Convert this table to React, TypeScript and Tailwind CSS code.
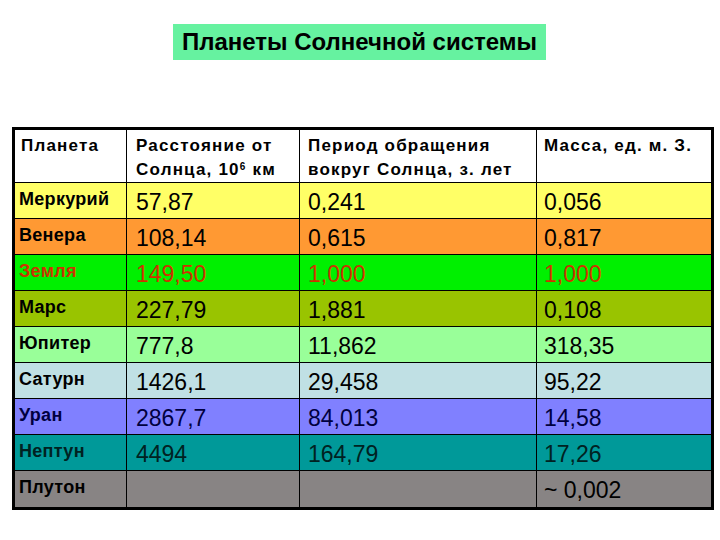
const rows = [
  { name: "Меркурий", dist: "57,87", period: "0,241", mass: "0,056", bg: "bg-[#ffff66]", text: "text-black" },
  { name: "Венера", dist: "108,14", period: "0,615", mass: "0,817", bg: "bg-[#ff9933]", text: "text-black" },
  { name: "Земля", dist: "149,50", period: "1,000", mass: "1,000", bg: "bg-[#00f000]", text: "text-[#cc3300]" },
  { name: "Марс", dist: "227,79", period: "1,881", mass: "0,108", bg: "bg-[#99c400]", text: "text-black" },
  { name: "Юпитер", dist: "777,8", period: "11,862", mass: "318,35", bg: "bg-[#99ff99]", text: "text-black" },
  { name: "Сатурн", dist: "1426,1", period: "29,458", mass: "95,22", bg: "bg-[#c0e0e4]", text: "text-black" },
  { name: "Уран", dist: "2867,7", period: "84,013", mass: "14,58", bg: "bg-[#8080ff]", text: "text-[#000040]" },
  { name: "Нептун", dist: "4494", period: "164,79", mass: "17,26", bg: "bg-[#009999]", text: "text-[#002222]" },
  { name: "Плутон", dist: "", period: "", mass: "~ 0,002", bg: "bg-[#888484]", text: "text-black" },
];

export default function App() {
  return (
    <div className="h-[540px] w-[720px] bg-white font-['Liberation_Sans',Arial,sans-serif]">
      <div className="flex pt-[24px] pl-[173px]">
        <div className="flex h-[36px] w-[373px] items-center justify-center bg-[#66f2a0] text-[24px] font-bold text-black">
          Планеты Солнечной системы
        </div>
      </div>

      <div className="mt-[67px] ml-[12px] w-[702px] border-[3px] border-black">
        <div className="grid grid-cols-[112px_173px_237px_1fr]">
          <div className="h-[53px] border-r border-b border-black bg-white px-[6px] pt-[4px] text-[17px] leading-[24px] font-bold tracking-[1.2px]">
            Планета
          </div>
          <div className="h-[53px] border-r border-b border-black bg-white px-[9px] pt-[4px] text-[17px] leading-[24px] font-bold tracking-[1.2px]">
            Расстояние от
            <br />
            Солнца, 10<sup className="text-[10px]">6</sup> км
          </div>
          <div className="h-[53px] border-r border-b border-black bg-white px-[8px] pt-[4px] text-[17px] leading-[24px] font-bold tracking-[1.2px]">
            Период обращения
            <br />
            вокруг Солнца, з. лет
          </div>
          <div className="h-[53px] border-b border-black bg-white px-[7px] pt-[4px] text-[17px] leading-[24px] font-bold tracking-[1.2px]">
            Масса, ед. м. З.
          </div>

          {rows.map((r, i) => {
            const last = i === rows.length - 1;
            const bb = last ? "" : "border-b";
            return (
              <div key={r.name} className={`contents ${r.text}`}>
                <div className={`h-[36px] border-r ${bb} border-black ${r.bg} pl-[4px] pt-[6px] text-[18px] leading-[20px] font-bold tracking-[0.3px]`}>
                  {r.name}
                </div>
                <div className={`h-[36px] border-r ${bb} border-black ${r.bg} px-[9px] pt-[6px] text-[23px] leading-[26px]`}>
                  {r.dist}
                </div>
                <div className={`h-[36px] border-r ${bb} border-black ${r.bg} px-[8px] pt-[6px] text-[23px] leading-[26px]`}>
                  {r.period}
                </div>
                <div className={`h-[36px] ${bb} border-black ${r.bg} px-[7px] pt-[6px] text-[23px] leading-[26px]`}>
                  {r.mass}
                </div>
              </div>
            );
          })}
        </div>
      </div>
    </div>
  );
}
